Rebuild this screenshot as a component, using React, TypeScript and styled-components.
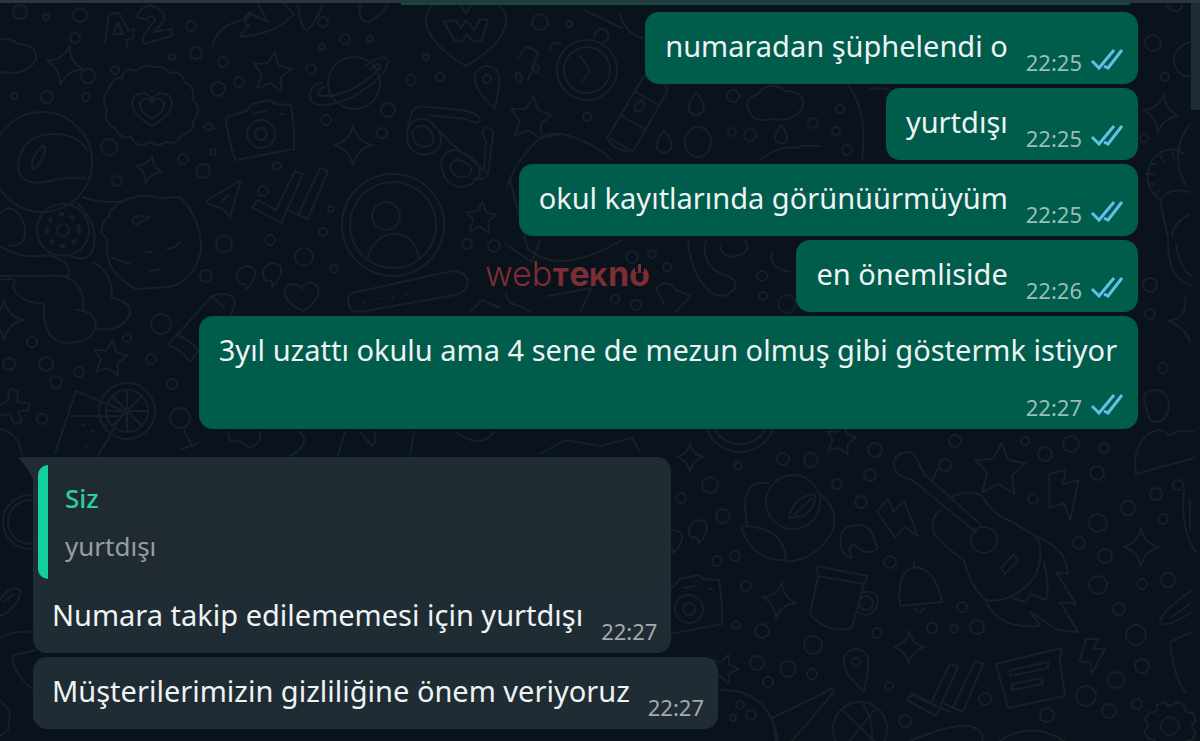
import React from "react";
import styled, { createGlobalStyle } from "styled-components";

const GlobalStyle = createGlobalStyle`
  * { box-sizing: border-box; }
  body {
    margin: 0;
    background: #0a131b;
    font-family: "Noto Sans", "Open Sans", sans-serif;
  }
`;

const Page = styled.div`
  position: relative;
  min-height: 100vh;
  overflow: hidden;
  background: #0a131b;
`;

const Wallpaper = styled.svg`
  position: absolute;
  inset: 0;
  width: 100%;
  height: 100%;
  fill: none;
  stroke: #162028;
  stroke-width: 2;
  stroke-linecap: round;
  stroke-linejoin: round;

  path {
    vector-effect: non-scaling-stroke;
  }
`;

const TopEdge = styled.header`
  position: relative;
  height: 3px;
  background: #2a363e;
`;

const ScrollThumb = styled.div`
  position: absolute;
  top: 3px;
  right: 0;
  width: 9px;
  height: 107px;
  background: #1f2b33;
`;

const Chat = styled.main`
  position: relative;
  display: flex;
  flex-direction: column;
  padding: 0 62px 11px 33px;
`;

const PreviousEdge = styled.div`
  align-self: flex-end;
  width: 66%;
  height: 2px;
  margin-right: 8px;
  background: #04513f;
`;

const MessageGroup = styled.ul<{ $own?: boolean }>`
  display: flex;
  flex-direction: column;
  align-items: ${(p) => (p.$own ? "flex-end" : "flex-start")};
  gap: 4px;
  margin: ${(p) => (p.$own ? "7px 0 0" : "28px 0 0")};
  padding: 0;
  list-style: none;
`;

const Bubble = styled.li<{ $own?: boolean; $tail?: boolean }>`
  position: relative;
  max-width: 85%;
  border-radius: ${(p) => (p.$tail ? "0 14px 14px 14px" : "14px")};
  background: ${(p) => (p.$own ? "#005c4b" : "#202c33")};
`;

const Tail = styled.svg`
  position: absolute;
  top: 0;
  left: -15px;
  width: 16px;
  height: 24px;
  fill: #202c33;
`;

const Body = styled.div<{ $own?: boolean }>`
  display: flex;
  flex-wrap: wrap;
  justify-content: space-between;
  gap: 17px 18px;
  padding: ${(p) => (p.$own ? "12px 15px 10px 20px" : "12px 14px 10px 19px")};
`;

const Text = styled.span`
  min-height: 50px;
  color: #eef3f4;
  font-size: 29px;
  line-height: 44px;
`;

const Meta = styled.span<{ $own?: boolean }>`
  display: flex;
  align-items: center;
  align-self: flex-end;
  gap: 9px;
  margin-left: auto;
  color: ${(p) => (p.$own ? "#99beb7" : "#a3aaae")};
  font-size: 22px;
  line-height: 24px;
`;

const Ticks = styled.svg`
  width: 32px;
  height: 24px;
  overflow: visible;
  fill: none;
  stroke: #5fc0e8;
  stroke-width: 3;
`;

const Quote = styled.blockquote`
  margin: 0 5px 2px;
  padding: 18px 17px;
  border-left: 10px solid #12cf9f;
  border-radius: 10px;
  background: #202b31;
`;

const QuoteArea = styled.div`
  padding-top: 8px;
`;

const QuoteAuthor = styled.cite`
  display: block;
  color: #2bcf9f;
  font-size: 26px;
  font-style: normal;
  font-weight: 500;
  line-height: 30px;
`;

const QuoteText = styled.p`
  margin: 18px 0 0;
  color: #959da1;
  font-size: 26px;
  line-height: 30px;
`;

const Watermark = styled.div`
  position: absolute;
  top: 249px;
  left: 485px;
  display: flex;
  align-items: baseline;
  color: #7d2d33;
  font-family: Inter, sans-serif;
  font-size: 34px;
  line-height: 44px;
`;

const Light = styled.span`
  font-weight: 300;
`;

const Heavy = styled.span`
  font-weight: 700;
`;

const SmallCap = styled.span`
  font-size: 25px;
  font-weight: 800;
`;

const PowerO = styled.span`
  position: relative;
  font-weight: 700;
`;

const PowerMark = styled.svg`
  position: absolute;
  top: 12px;
  left: 6px;
  width: 9px;
  height: 12px;
`;

type At = { x: number; y: number; s?: number; r?: number };
const place = ({ x, y, s = 1, r = 0 }: At) => `translate(${x} ${y}) rotate(${r}) scale(${s})`;

const Star = (p: At) => (
  <path transform={place(p)} d="M0-20 6-7 20-5 10 5 13 20 0 13-13 20-10 5-20-5-6-7Z" />
);
const Spark = (p: At) => (
  <path transform={place(p)} d="M0-20Q3-4 19 0Q4 4 0 20Q-4 4-19 0Q-3-4 0-20Z" />
);
const Heart = (p: At) => (
  <path transform={place(p)} d="M0 18C-28 2-22-14-10-15Q-3-15 0-8Q3-15 10-15C22-14 28 2 0 18Z" />
);
const Bolt = (p: At) => (
  <path transform={place(p)} d="M-14-20 2-24-1-10 14-14 6 24 0 8-14 12Z" />
);
const Camera = (p: At) => (
  <g transform={place(p)}>
    <path d="M-31-15-14-20-10-27 10-31 14-27 30-26Q34 0 33 18L-25 29Q-29 24-35-8Q-36-14-31-15Z" />
    <circle cx="0" cy="3" r="14" />
    <circle cx="0" cy="3" r="6" />
    <path d="M-6-18 5-20M20-17h3" />
  </g>
);
const Pin = (p: At) => (
  <g transform={place(p)}>
    <path d="M8 24C-4 12-12 4-12-6A12 12 0 0 1 12-8C13 2 10 10 8 24Z" />
    <circle cx="0" cy="-6" r="4" />
  </g>
);
const DoubleCheck = (p: At) => (
  <g transform={place(p)}>
    <path d="M-38 12-32 5-14 15 5-24 13-21-9 28Z" />
    <path d="M0 16 8 20 30-27 38-24 18 24 4 18" />
  </g>
);
const Cloud = (p: At) => (
  <path transform={place(p)} d="M-24 10Q-34-6-18-10Q-6-26 10-14Q30-14 28 2Q18 18-4 14Q-18 18-24 10Z" />
);
const Drop = (p: At) => <path transform={place(p)} d="M0-12Q10 0 7 7Q0 14-7 7Q-9 0 0-12Z" />;
const QuoteMark = (p: At) => (
  <path transform={place(p)} d="M2 14Q14 2 10-7A10 10 0 1 0-4 8Q4 6 2 14Z" />
);
const Avatar = (p: At) => (
  <g transform={place(p)}>
    <circle r="51" />
    <circle r="43" />
    <circle cx="-7" cy="-9" r="14" />
    <path d="M-26 34Q-18 8 2 9Q22 10 26 33" />
  </g>
);
const Gear = (p: At) => (
  <g transform={place(p)}>
    <path d="M-6-24Q0-17 6-24L14-21Q14-12 23-13L26-5Q18 0 26 6L22 14Q13 13 13 22L5 25Q0 17-6 25L-14 21Q-13 12-22 13L-26 5Q-18 0-25-6L-21-14Q-12-12-13-21Z" />
    <circle r="9" />
  </g>
);

/* x, y and radius of the small bubbles scattered between the doodles */
const rings = [
  [20, 12, 7], [46, 17, 3], [80, 15, 7], [75, 38, 5], [88, 76, 7], [47, 97, 6], [14, 96, 3], [86, 97, 4],
  [115, 70, 4], [191, 26, 5], [196, 53, 6], [172, 57, 3], [223, 62, 5], [239, 82, 5], [218, 89, 7],
  [109, 147, 8], [183, 159, 5], [203, 171, 7], [117, 181, 5], [213, 152, 3], [263, 191, 5], [311, 69, 5],
  [323, 22, 5], [345, 39, 5], [370, 39, 3], [388, 110, 7], [382, 133, 5], [326, 120, 5], [322, 47, 3],
  [331, 209, 3], [323, 232, 4], [277, 166, 4], [270, 240, 5], [224, 244, 8], [206, 276, 6], [304, 257, 9],
  [334, 269, 4], [161, 324, 10], [127, 338, 4], [32, 342, 5], [9, 364, 6], [46, 364, 7], [79, 372, 5],
  [56, 382, 6], [151, 359, 5], [172, 384, 5], [42, 419, 5], [411, 80, 5], [440, 77, 4], [426, 57, 3],
  [540, 22, 8], [569, 24, 3], [587, 117, 4], [733, 96, 6], [732, 132, 4], [750, 135, 6], [467, 244, 5],
  [494, 246, 6], [632, 257, 6], [652, 254, 4], [667, 267, 4], [615, 299, 4], [636, 305, 5], [762, 276, 5],
  [763, 296, 4], [787, 304, 9], [813, 123, 5], [836, 131, 4], [847, 150, 5], [840, 109, 4],
  [1153, 43, 8], [1165, 77, 4], [1144, 138, 4], [1150, 285, 7], [1150, 314, 5], [1163, 368, 5],
  [811, 460, 7], [875, 450, 7], [955, 441, 6], [870, 475, 6], [1025, 441, 4], [945, 465, 6],
  [1071, 444, 8], [1045, 454, 7], [1104, 448, 5], [1097, 473, 7], [710, 485, 8], [738, 466, 4],
  [783, 459, 6], [837, 484, 5], [861, 502, 6], [723, 516, 7], [681, 498, 5],
  [717, 561, 5], [735, 556, 5], [746, 586, 5], [762, 631, 7], [736, 625, 4], [813, 645, 9],
  [757, 663, 7], [788, 669, 8], [812, 674, 5], [768, 682, 5], [877, 633, 5], [889, 686, 4],
  [890, 562, 6], [1033, 499, 5], [1098, 523, 9], [1128, 508, 7], [1156, 494, 6], [1178, 485, 5],
  [1163, 519, 5], [1079, 543, 6], [1105, 556, 7], [1098, 585, 9], [1142, 584, 5], [1168, 580, 7],
  [1119, 609, 6], [962, 607, 5], [977, 627, 7], [954, 629, 4], [932, 628, 5], [1136, 635, 10],
  [1142, 666, 7], [1116, 680, 8], [1086, 696, 10], [1109, 711, 7], [1137, 704, 5], [985, 699, 6],
  [1047, 715, 7], [905, 721, 6], [740, 705, 4], [751, 715, 5], [733, 718, 3],
];

const Doodles = () => (
  <Wallpaper viewBox="0 0 1200 741" preserveAspectRatio="xMidYMid slice" aria-hidden="true">
    {rings.map(([x, y, r], i) => (
      <circle key={i} cx={x} cy={y} r={r} />
    ))}
    <Cloud x={8} y={58} />
    <path d="M105 43 109 14 119 13 128 30 134 29 133 38 126 40 128 49M113 34l5-12 5 12ZM137 17Q140 5 152 6Q166 10 164 21L154 32 171 29 172 36 144 44 143 36 155 20Q152 12 147 20Z" />
    <path d="M213 46Q216 26 243 20L250 12M240 36 249 25Q240 24 251 14L268 22 258 4M241 37Q270 34 285 22L294 14 284 4M298 6Q302 34 308 29Q317 21 322 5M360 5Q358 24 370 22Q382 14 388 5" />
    <Spark x={65} y={65} r={14} />
    <path d="M109 88Q114 76 122 78Q124 66 136 71Q144 64 154 67Q164 66 170 73Q182 70 185 83Q195 86 193 100Q203 110 193 122Q194 133 182 134Q178 145 166 142Q158 148 150 142Q138 150 131 137Q121 140 115 128Q102 122 107 110Q100 100 109 88Z" />
    <Heart x={152} y={108} />
    <Heart x={152} y={108} s={0.6} />
    <circle cx="42" cy="162" r="50" />
    <path d="M86 179Q71 175 50 181Q22 188 18 168Q20 134 54 134Q78 134 88 151M32 166Q31 156 43 145Q50 150 34 170Z" />
    <Star x={272} y={71} s={0.95} r={8} />
    <circle cx="354" cy="83" r="26" />
    <path d="M365 66Q384 52 388 61Q388 76 351 98Q315 112 310 98Q309 84 322 83M370 70Q382 59 380 68Q350 98 320 96Q314 92 325 86" />
    <Camera x={261} y={131} />
    <Spark x={353} y={145} />
    <Spark x={149} y={169} s={0.7} r={14} />
    <path d="M206 201 241 180 230 217 222 208 210 205Z M221 202 228 195M203 127l6-4 5 5q-7 5-11-1" />
    <DoubleCheck x={290} y={195} />
    <Avatar x={393} y={225} />
    <circle cx="63" cy="230" r="26" />
    <circle cx="63" cy="230" r="6" />
    <circle cx="63" cy="230" r="16" strokeDasharray="2 10" strokeWidth="4" />
    <path d="M82 197Q100 204 124 201M0 213Q14 200 24 224Q30 246 8 246M78 204Q101 226 92 252Q86 262 70 256M0 246Q20 260 48 255Q74 262 68 276L0 276" />
    <path d="M109 213Q128 190 160 198L180 197Q202 220 201 250Q194 282 168 287L136 289Q104 272 107 243Q108 238 101 233Q102 220 110 216Z M132 221Q134 214 150 217L136 225Z M112 258 130 264M150 271l10-2M146 252h6M166 248q8 2 14-6" />
    <path d="M0 280Q20 276 13 285Q14 300 42 304M0 276Q22 276 40 276 86 270 83 310M76 310Q94 310 96 326Q92 343 65 343Q42 340 44 304M92 262Q112 270 112 298Q132 302 130 314Q122 332 98 329" />
    <Spark x={4} y={320} />
    <QuoteMark x={244} y={276} />
    <QuoteMark x={270} y={273} />
    <Heart x={302} y={296} s={0.85} r={-5} />
    <path d="M352 293 452 271Q468 272 468 283Q466 292 455 295L360 312Q349 312 348 302Q348 296 352 293Z M364 302h1M378 299h1M392 297h1M406 294h1" />
    <path d="M168 345 212 296Q232 290 235 302L230 320M168 345Q182 350 190 362L200 348M176 334Q190 340 200 352M212 296 224 308" />
    <Star x={110} y={357} s={0.85} r={10} />
    <path d="M55 453 76 391 124 411 98 456M70 416H118M82 425h2M92 431h2M104 425h2M86 446h2" />
    <circle cx="127" cy="411" r="28" />
    <circle cx="127" cy="411" r="21" />
    <path d="M127 390V432M106 411H148M112 396 142 426M142 396 112 426" />
    <path d="M-4 408 8 400 10 388 18 392 17 402 30 404 28 410 18 412 22 422 14 424 10 414-2 416" />
    <circle cx="180" cy="418" r="10" />
    <path d="M184 430 192 446 198 443M180 450 190 446M0 429Q20 434 22 455M228 432Q228 446 240 440Q250 454 260 440V432M300 432Q312 444 290 456M345 432 338 455M360 432 372 446Q378 440 374 432M414 432 410 456M456 432Q480 450 494 432M540 454 565 440 600 446 632 438 640 452" />
    <Heart x={466} y={30} s={2} />
    <path d="M444 22 456 20 461 28 466 20 474 30 480 19 488 20 482 40 474 42 467 34 462 42 454 40Z M518 58 526 46 538 52 528 80M516 72Q514 84 521 82Q524 74 516 72M534 64Q532 74 538 72Q540 64 534 64" />
    <Pin x={487} y={85} />
    <Star x={531} y={117} s={1.05} r={8} />
    <circle cx="587" cy="70" r="30" />
    <circle cx="587" cy="70" r="23" />
    <path d="M580 56 590 70 582 82M594 36Q598 26 606 30Q612 38 604 42M550 50Q550 40 560 44M620 14Q624 32 642 38M584 10 622 28" />
    <path d="M412 112Q416 105 428 107L462 110Q480 114 480 120Q478 126 466 119L428 115M412 112 408 126M430 122 452 144M452 144 486 172M484 128Q494 126 493 136L488 174Q482 182 474 178M484 128Q480 134 486 140L484 168" />
    <path d="M408 128Q414 116 428 120Q444 130 440 146Q434 156 420 154Q404 150 408 128ZM412 132Q418 122 428 128Q438 138 430 146Q414 150 412 132ZM441 162Q446 146 462 152Q480 160 480 174Q472 188 458 187Q442 182 441 162ZM450 166Q454 156 464 162Q476 168 468 176Q452 180 450 166Z" />
    <path d="M607 138 644 76Q668 80 667 92L634 150Q616 154 607 138ZM636 92 660 106M622 116 646 130M610 138 630 150M636 112Q632 104 642 100Q648 110 636 112" />
    <Drop x={696} y={104} />
    <Drop x={664} y={142} />
    <Drop x={781} y={135} s={0.8} />
    <ellipse cx="698" cy="142" rx="13" ry="15" />
    <Cloud x={775} y={105} />
    <path d="M507 188Q514 162 540 138L562 134Q590 140 612 160M510 180 528 250M540 138Q548 132 560 134M760 160Q780 144 800 148M848 85Q868 110 862 160M868 90Q880 86 890 90M800 146H820" />
    <Star x={481} y={217} s={0.75} r={6} />
    <path d="M530 250Q560 276 622 240M505 244 532 262 540 240M688 240Q690 270 706 288 722 304 735 288Q738 278 722 274Q700 264 706 240M720 246Q724 262 742 254Q752 248 744 240M772 252Q768 268 790 272M548 296 592 288 580 312M656 288Q668 278 676 290L690 296 676 312M656 288 664 304M506 292Q506 304 520 306L530 312M470 312 482 300 500 308" />
    <path d="M1166 5Q1178 18 1182 5M1190 42Q1168 50 1176 68Q1182 78 1190 76M1168 238 1160 200Q1140 186 1152 160Q1168 142 1184 154M1160 200Q1170 186 1190 192M1190 124Q1168 152 1186 186M1172 236Q1174 222 1190 214M1168 242Q1168 280 1192 286M1176 244Q1180 270 1192 276" />
    <path d="M1150 164h6M1147 174h7M1148 184h7M1154 194l6-4M1160 156l4 6M1172 152l2 6" />
    <Spark x={1161} y={113} s={0.95} r={10} />
    <path d="M1185 298Q1188 318 1168 321Q1184 326 1190 342M1145 404Q1140 390 1156 390Q1172 392 1168 412Q1162 426 1150 420ZM1136 474 1194 458M1136 474Q1132 450 1146 436Q1162 424 1168 436Q1180 428 1194 432" />
    <Star x={1000} y={468} s={1.25} r={4} />
    <Star x={841} y={438} s={0.75} r={12} />
    <Bolt x={1064} y={495} s={1.05} />
    <Bolt x={900} y={520} r={-34} />
    <Bolt x={1092} y={656} s={0.75} r={16} />
    <Spark x={1141} y={547} s={0.95} />
    <Spark x={690} y={457} s={0.7} />
    <Spark x={779} y={600} s={0.9} r={10} />
    <Spark x={909} y={647} s={0.8} />
    <Star x={724} y={668} s={0.7} r={18} />
    <circle cx="740" cy="416" r="36" />
    <circle cx="740" cy="414" r="30" />
    <circle cx="793" cy="502" r="27" />
    <path d="M768 483Q744 480 745 508L747 526M741 526Q784 526 786 560Q752 562 741 526ZM820 494Q840 510 832 532Q816 560 786 562M789 518Q792 498 814 494Q818 506 803 516ZM795 514 812 498M841 546Q838 524 860 525Q872 526 874 540L878 548Q866 558 854 544Q846 546 852 558Q842 556 841 546Z" />
    <QuoteMark x={696} y={530} />
    <QuoteMark x={671} y={540} />
    <Camera x={689} y={606} />
    <path d="M816 566 868 576 864 584 818 576ZM818 576 810 614Q826 634 852 628L864 584M862 592Q882 590 877 606Q870 620 858 612" />
    <circle cx="866" cy="603" r="7" />
    <path d="M900 606Q896 570 916 567Q936 570 942 602ZM914 566v-4M914 608q6 8 10 0" />
    <path d="M894 460Q892 476 912 480L976 532M924 474 980 524M894 460Q902 448 914 454L924 474M932 482 938 468M950 498Q968 488 982 496Q992 514 1012 522L1036 536Q1046 554 1034 578Q1012 604 986 600Q972 590 964 560Q946 548 934 534Q930 514 942 510" />
    <circle cx="984" cy="540" r="13" />
    <path d="M1001 568 1014 554 1018 560 1005 574ZM1034 536Q1066 546 1068 574L1056 572 1076 604 1060 602 1078 632 1058 630 1030 612 1040 626Q1000 630 986 602M1044 562Q1050 590 1046 600L1030 594 1026 602 1012 598" />
    <DoubleCheck x={945} y={688} />
    <path d="M996 664 1062 648 1060 660 1065 696 1008 708ZM1010 670 1048 662V668L1010 676ZM1012 684 1042 678V684L1012 690ZM1160 622Q1160 612 1192 590M1162 624Q1170 626 1192 612M1170 618 1190 604M1170 642 1192 632M1170 642Q1174 680 1186 692M1184 490Q1180 530 1196 552M1190 500V530" />
    <Gear x={1170} y={726} />
    <Pin x={856} y={668} />
    <circle cx="860" cy="729" r="27" />
    <path d="M842 710 882 748M876 708 844 748M862 702Q874 720 872 741M722 690Q770 690 778 741M772 718 826 692Q834 686 834 692L792 741M772 718 776 741M910 694 950 712M1000 741Q1030 720 1064 741M910 741Q950 724 970 726 986 732 982 741" />
    <circle cx="30" cy="522" r="27" />
    <circle cx="30" cy="522" r="22" />
    <path d="M0 600Q10 584 20 590Q22 600 8 612L0 616M4 602 14 594M0 638Q16 630 33 632M14 655 36 650M12 656Q14 676 34 690M0 700 10 712 8 730 0 736" />
  </Wallpaper>
);

type Message = { text: string; time: string };

const sent: Message[] = [
  { text: "numaradan şüphelendi o", time: "22:25" },
  { text: "yurtdışı", time: "22:25" },
  { text: "okul kayıtlarında görünüürmüyüm", time: "22:25" },
  { text: "en önemliside", time: "22:26" },
  { text: "3yıl uzattı okulu ama 4 sene de mezun olmuş gibi göstermk istiyor", time: "22:27" },
];

const MessageBody = ({ text, time, own }: Message & { own?: boolean }) => (
  <Body $own={own}>
    <Text>{text}</Text>
    <Meta $own={own}>
      <time>{time}</time>
      {own && (
        <Ticks viewBox="0 0 32 24" aria-hidden="true">
          <path d="M1 11 8 18 23 0M13 16 17 18 31 0" />
        </Ticks>
      )}
    </Meta>
  </Body>
);

export default function App() {
  return (
    <Page lang="tr">
      <GlobalStyle />
      <Doodles />
      <TopEdge />
      <Chat>
        <PreviousEdge />
        <MessageGroup $own>
          {sent.map((m) => (
            <Bubble key={m.text} $own>
              <MessageBody {...m} own />
            </Bubble>
          ))}
        </MessageGroup>
        <MessageGroup>
          <Bubble $tail>
            <Tail viewBox="0 0 16 24" aria-hidden="true">
              <path d="M0 0H16V24Q12 14 0 0Z" />
            </Tail>
            <QuoteArea>
              <Quote>
                <QuoteAuthor>Siz</QuoteAuthor>
                <QuoteText>yurtdışı</QuoteText>
              </Quote>
            </QuoteArea>
            <MessageBody text="Numara takip edilememesi için yurtdışı" time="22:27" />
          </Bubble>
          <Bubble>
            <MessageBody text="Müşterilerimizin gizliliğine önem veriyoruz" time="22:27" />
          </Bubble>
        </MessageGroup>
        <Watermark>
          <Light>web</Light>
          <SmallCap>T</SmallCap>
          <Heavy>e</Heavy>
          <SmallCap>K</SmallCap>
          <Heavy>n</Heavy>
          <PowerO>
            o
            <PowerMark viewBox="0 0 9 12" aria-hidden="true">
              <path d="M0 0H9V8H0Z" fill="#0a131b" />
              <path d="M4.500 0V9" stroke="#7d2d33" strokeWidth="3" />
            </PowerMark>
          </PowerO>
        </Watermark>
      </Chat>
      <ScrollThumb />
    </Page>
  );
}
